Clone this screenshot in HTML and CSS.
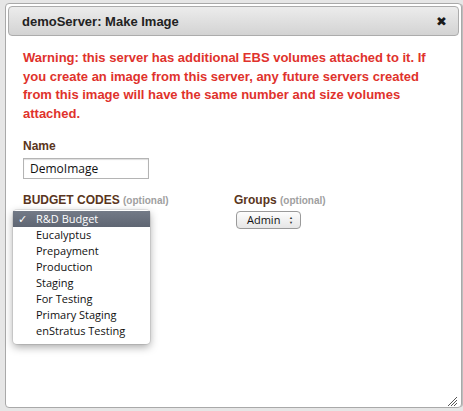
FILE: index.html
```html
<!DOCTYPE html>
<html>
<head>
<meta charset="utf-8">
<link rel="stylesheet" href="styles.css">
</head>
<body>
<div class="dialog">
  <div class="titlebar">
    <span class="title">demoServer: Make Image</span>
    <span class="close">&#10006;</span>
  </div>
  <div class="body">
    <p class="warning">Warning: this server has additional EBS volumes attached to it. If you create an image from this server, any future servers created from this image will have the same number and size volumes attached.</p>
    <div class="field">
      <div class="label">Name</div>
      <div class="input">DemoImage</div>
    </div>
    <div class="row">
      <div class="col budget">
        <div class="label">BUDGET CODES <span class="opt">(optional)</span></div>
        <div class="select-anchor">
          <div class="menu">
            <div class="item selected"><span class="check">&#10003;</span>R&amp;D Budget</div>
            <div class="item">Eucalyptus</div>
            <div class="item">Prepayment</div>
            <div class="item">Production</div>
            <div class="item">Staging</div>
            <div class="item">For Testing</div>
            <div class="item">Primary Staging</div>
            <div class="item">enStratus Testing</div>
          </div>
        </div>
      </div>
      <div class="col groups">
        <div class="label">Groups <span class="opt">(optional)</span></div>
        <div class="select"><span>Admin</span><span class="arrows">&#9650;<br>&#9660;</span></div>
      </div>
    </div>
  </div>
  <div class="grip">
    <svg width="11" height="11" viewBox="0 0 11 11"><path d="M1 10L10 1M4 10L10 4M7 10L10 7" stroke="#555" stroke-width="1" fill="none"/></svg>
  </div>
</div>
</body>
</html>
```
FILE: styles.css
```css
html, body { margin: 0; padding: 0; }
body {
  background: #e6e6e6;
  width: 463px;
  height: 411px;
  overflow: hidden;
  font-family: "Liberation Sans", Arial, sans-serif;
}
.dialog {
  position: relative;
  margin: 3px 0 0 5px;
  width: 451px;
  height: 402px;
  background: #fff;
  border: 1px solid #a9a9a9;
  border-radius: 4px;
  padding: 1px 2px 0 2px;
  box-shadow: 2px 0 0 -1px #bdbdbd;
}
.titlebar {
  height: 27px;
  margin-top: 1px;
  border: 1px solid #acacac;
  border-radius: 4px;
  background: linear-gradient(#ececec, #d3d3d3);
  display: flex;
  align-items: center;
  justify-content: space-between;
  padding: 1px 11px 0 13px;
  box-sizing: content-box;
}
.title {
  font-weight: bold;
  font-size: 13px;
  color: #222;
}
.close {
  font-size: 13px;
  color: #1a1a1a;
  font-family: "DejaVu Sans", sans-serif;
  font-weight: bold;
}
.body {
  padding: 13px 14px 0 15px;
}
.warning {
  margin: 0;
  color: #e0322c;
  font-weight: bold;
  font-size: 13px;
  line-height: 18.7px;
  width: 412px;
}
.field { margin-top: 15px; }
.label {
  font-weight: bold;
  font-size: 12px;
  color: #5a3520;
}
.opt {
  font-size: 10px;
  color: #a0a0a0;
}
.input {
  margin-top: 5px;
  width: 118px;
  height: 19px;
  border: 1px solid #b4b4b4;
  box-shadow: inset 0 1px 1px #ddd;
  padding-left: 6px;
  font-family: "Open Sans", sans-serif;
  font-size: 12px;
  line-height: 19px;
  color: #111;
}
.row {
  display: flex;
  margin-top: 14px;
}
.col.budget { width: 211px; }
.select-anchor {
  position: relative;
  height: 18px;
}
.menu {
  position: absolute;
  left: -10px;
  top: 3px;
  width: 137px;
  background: #fff;
  border-radius: 4px;
  box-shadow: 0 3px 8px rgba(0,0,0,0.35), 0 0 0 1px rgba(0,0,0,0.08);
  padding: 1px 0 5px;
  font-family: "Open Sans", sans-serif;
  font-size: 11px;
  color: #111;
}
.item {
  height: 16px;
  line-height: 16px;
  padding-left: 23px;
  position: relative;
}
.item.selected {
  background: linear-gradient(#737a87, #5f6673);
  color: #fff;
}
.check {
  position: absolute;
  left: 5px;
  top: 0;
}
.select {
  margin-top: 4px;
  margin-left: 2px;
  border: 1px solid #9a9a9a;
  border-radius: 4px;
  background: linear-gradient(#fdfdfd, #e6e6e6);
  display: flex;
  align-items: center;
  justify-content: space-between;
  padding: 0 7px 0 10px;
  box-sizing: border-box;
  width: 65px;
  height: 18px;
  font-family: "Open Sans", sans-serif;
  font-size: 11px;
  color: #111;
}
.arrows {
  font-size: 4px;
  line-height: 5px;
  color: #333;
}
.grip {
  position: absolute;
  right: 3px;
  bottom: 3px;
  width: 11px;
  height: 11px;
}
```
